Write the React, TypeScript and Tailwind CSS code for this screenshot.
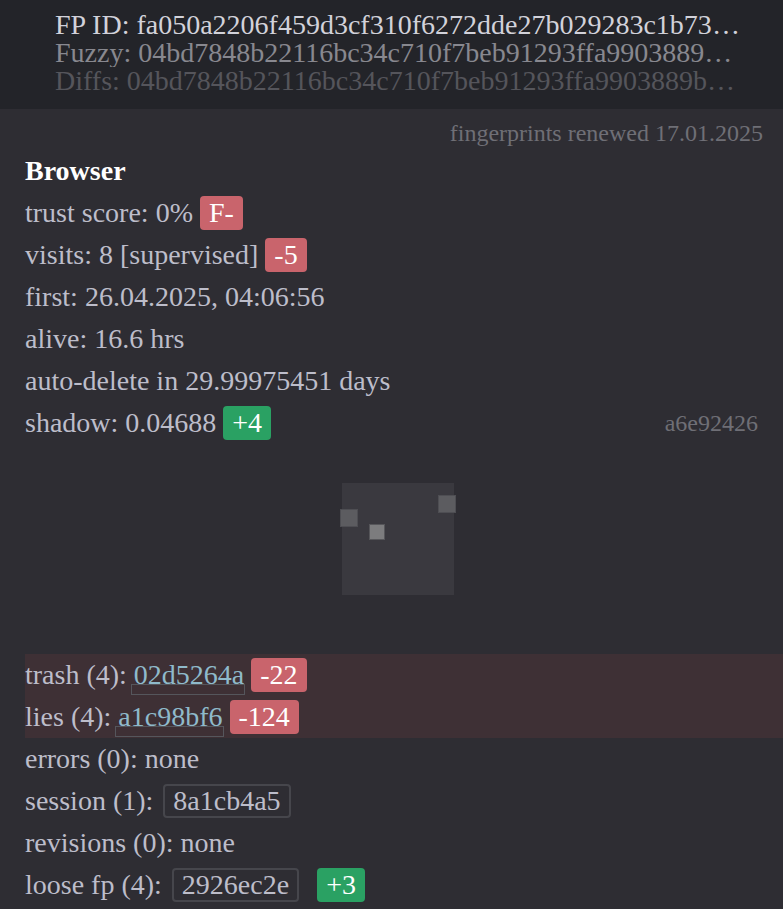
import React from "react";

const serif = "font-['Liberation_Serif','Times_New_Roman',serif]";

function Badge({ children, tone }: { children: React.ReactNode; tone: "red" | "green" }) {
  const bg = tone === "red" ? "bg-[#c9646c]" : "bg-[#2aa163]";
  return (
    <span className={`${bg} ml-[7px] inline-flex h-[34px] items-center rounded-[4px] px-[9px] leading-none text-white`}>
      {children}
    </span>
  );
}

function Hash({ children }: { children: React.ReactNode }) {
  return (
    <span className="relative inline-block text-[#8fbacb]">
      <span className="absolute bottom-[1px] left-[-3px] right-[-1px] h-[11px] border border-[#55565c]" />
      <span className="relative">{children}</span>
    </span>
  );
}

function Boxed({ children }: { children: React.ReactNode }) {
  return (
    <span className="ml-[3px] inline-flex h-[34px] items-center rounded-[4px] border-2 border-[#46464c] px-[8px] leading-none">
      {children}
    </span>
  );
}

function Row({ children, className = "" }: { children: React.ReactNode; className?: string }) {
  return <div className={`flex h-[42px] items-center whitespace-pre ${className}`}>{children}</div>;
}

function Avatar() {
  return (
    <svg width="120" height="112" viewBox="0 0 120 112" aria-label="fingerprint image">
      <rect x="4" y="0" width="112" height="112" fill="#3a393f" />
      <rect x="2.5" y="26.5" width="17" height="17" fill="#5c5c60" stroke="#4e4e53" />
      <rect x="31.5" y="41.5" width="15" height="15" fill="#7c7c7e" stroke="#56565a" />
      <rect x="100.5" y="12.5" width="17" height="17" fill="#5c5c60" stroke="#4e4e53" />
    </svg>
  );
}

export default function App() {
  return (
    <div className={`${serif} min-h-[909px] bg-[#2e2d33] text-[28px] text-[#bdbdca]`}>
      <div className="bg-[#232429] pb-[14px] pl-[55px] pr-[43px] pt-[11px] text-[28px] leading-[28px]">
        <div className="truncate text-[#d2d2da]">FP ID: fa050a2206f459d3cf310f6272dde27b029283c1b73d1e2f</div>
        <div className="truncate text-[#88888f]">Fuzzy: 04bd7848b22116bc34c710f7beb91293ffa9903889b51c0a</div>
        <div className="truncate text-[#55555b]">Diffs: 04bd7848b22116bc34c710f7beb91293ffa9903889b51c0a</div>
      </div>

      <div className="pl-[25px]">
        <div className="flex h-[41px] items-center justify-end pr-[20px] pt-[6px] text-[24px] text-[#6f6f76]">
          fingerprints renewed 17.01.2025
        </div>
        <Row className="font-bold text-white">Browser</Row>
        <Row>
          trust score: 0%<Badge tone="red">F-</Badge>
        </Row>
        <Row>
          visits: 8 [supervised]<Badge tone="red">-5</Badge>
        </Row>
        <Row>first: 26.04.2025, 04:06:56</Row>
        <Row>alive: 16.6 hrs</Row>
        <Row>auto-delete in 29.99975451 days</Row>
        <Row className="justify-between pr-[25px]">
          <span className="flex items-center">
            shadow: 0.04688<Badge tone="green">+4</Badge>
          </span>
          <span className="text-[24px] text-[#6f6f76]">a6e92426</span>
        </Row>

        <div className="pb-[59px] pl-[313px] pt-[39px]">
          <Avatar />
        </div>

        <div className="bg-[#3e3035]">
          <Row>
            trash (4): <Hash>02d5264a</Hash>
            <Badge tone="red">-22</Badge>
          </Row>
          <Row>
            lies (4): <Hash>a1c98bf6</Hash>
            <Badge tone="red">-124</Badge>
          </Row>
        </div>
        <Row>errors (0): none</Row>
        <Row>
          session (1): <Boxed>8a1cb4a5</Boxed>
        </Row>
        <Row>revisions (0): none</Row>
        <Row>
          loose fp (4): <Boxed>2926ec2e</Boxed>
          <span className="ml-[11px]" />
          <Badge tone="green">+3</Badge>
        </Row>
      </div>
    </div>
  );
}
